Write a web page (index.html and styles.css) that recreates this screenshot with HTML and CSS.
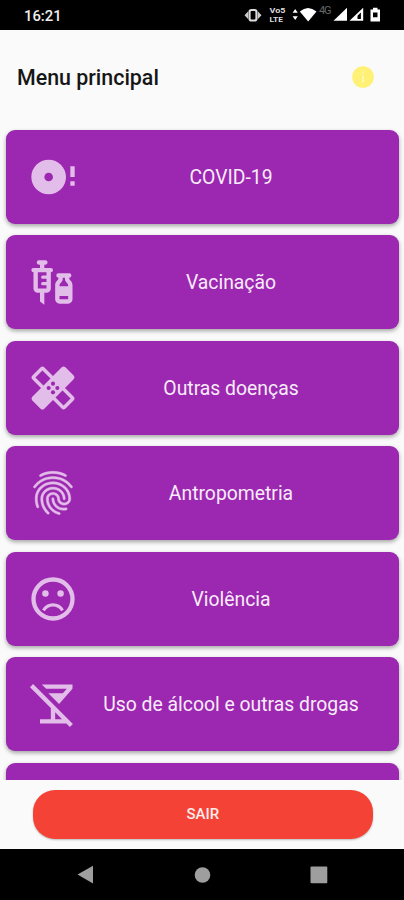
FILE: index.html
```
<!DOCTYPE html>
<html lang="pt-BR">
<head>
<meta charset="utf-8">
<title>Menu principal</title>
<link rel="stylesheet" href="styles.css">
</head>
<body>
<div class="phone">
  <header class="status">
    <span class="clock">16:21</span>
    <svg class="status-icons" width="140" height="29" viewBox="0 0 140 29" fill="#fff">
      <rect x="4.500" y="10" width="7" height="10.500" rx="2" fill="none" stroke="#ddd" stroke-width="2.200"/>
      <path d="M3 11.500v7.500L-.5 15.300zM13 11.500v7.500l3.500-3.700z" fill="#ccc"/>
      <g font-family="Roboto, sans-serif" font-weight="700">
        <text x="24.500" y="12.600" font-size="7" textLength="16" lengthAdjust="spacingAndGlyphs" fill="#ddd">Vo5</text>
        <text x="24.500" y="22" font-size="7.800" textLength="13.500" lengthAdjust="spacingAndGlyphs" fill="#ddd">LTE</text>
      </g>
      <path d="M50.200 9l2.600 3.800h-5.200zM50.200 20l2.600-3.800h-5.200z"/>
      <path d="M54.800 11.500Q63 4.500 71.500 11.500L63.200 21.600z"/>
      <text x="74" y="14" font-family="Roboto, sans-serif" font-size="11" textLength="12.500" fill="#666">4G</text>
      <path d="M88.500 20.700L102 7.800v12.900z"/>
      <path fill-rule="evenodd" d="M104.500 20.700L118.200 7.800v12.900zM112.500 19h3.400v-6.500l-3.400 3.300z"/>
      <path fill-rule="evenodd" d="M125.500 9.500h2.500V7.800h4.500v1.700h2.500v12h-9.500zM128 12.500v4.700h4.500v-4.700z"/>
    </svg>
  </header>
  <div class="appbar">
    <h1>Menu principal</h1>
    <svg class="info" width="22" height="22" viewBox="0 0 22 22">
      <circle cx="11" cy="11" r="10.800" fill="#fff176"/>
      <path d="M10 5.500h2v2h-2zM10 9.500h2v7h-2z" fill="#fff6ac"/>
    </svg>
  </div>
  <main class="list">
    <button class="card">
      <svg class="icon" viewBox="0 0 24 24"><path d="M20 16h2v-2h-2v2zm0-9v5h2V7h-2zM10 4c-4.420 0-8 3.580-8 8s3.580 8 8 8 8-3.580 8-8-3.580-8-8-8zm0 10c-1.100 0-2-.9-2-2s.9-2 2-2 2 .9 2 2-.9 2-2 2z"/></svg>
      <span class="label">COVID-19</span>
    </button>
    <button class="card">
      <svg class="icon" viewBox="0 0 24 24"><path fill-rule="evenodd" d="M11 5.500H8V4h.5a1 1 0 0 0 0-2h-3a1 1 0 0 0 0 2H6v1.500H3a1 1 0 0 0 0 2V15c0 1.100.9 2 2 2h1v4l2 1.500V17h1c1.100 0 2-.9 2-2V7.500a1 1 0 0 0 0-2zM9 9H7.250a.75.75 0 0 0 0 1.500H9V12H7.250a.75.75 0 0 0 0 1.500H9V15H5V7.500h4zM19.500 10.500V10a1 1 0 0 0 0-2h-5a1 1 0 0 0 0 2v.5c0 .5-1.500 1.160-1.500 3V20c0 1.100.9 2 2 2h4c1.100 0 2-.9 2-2v-6.500c0-1.840-1.500-2.500-1.500-3zM16.500 10.500V10h1v.5c0 1.600 1.500 2 1.500 3v.5h-4v-.5c0-1 1.500-1.400 1.500-3zM15 18.500h4V20h-4z"/></svg>
      <span class="label">Vacinação</span>
    </button>
    <button class="card">
      <svg class="icon" viewBox="0 0 24 24">
        <g transform="rotate(45 12 12)">
          <rect x="2" y="8.900" width="20" height="6.200" rx=".5" fill="none" stroke="#e3bde9" stroke-width="1.600"/>
          <rect x="8.100" y="1.200" width="7.800" height="21.600" rx="1.200"/>
        </g>
        <g fill="#9c27b0"><circle cx="12" cy="10" r=".95"/><circle cx="10" cy="12" r=".95"/><circle cx="14" cy="12" r=".95"/><circle cx="12" cy="14" r=".95"/></g>
      </svg>
      <span class="label">Outras doenças</span>
    </button>
    <button class="card">
      <svg class="icon" viewBox="0 0 24 24"><path stroke="#e3bde9" stroke-width=".25" d="M17.810 4.470c-.08 0-.16-.02-.23-.06C15.660 3.420 14 3 12.010 3c-1.980 0-3.860.47-5.570 1.410-.24.13-.54.04-.68-.2-.13-.24-.04-.55.2-.68C7.820 2.520 9.860 2 12.010 2c2.130 0 3.990.47 6.030 1.520.25.13.34.43.21.67-.09.18-.26.28-.44.28zM3.500 9.720c-.1 0-.2-.03-.29-.09-.23-.16-.28-.47-.12-.7.99-1.400 2.250-2.500 3.750-3.270C9.980 4.040 14 4.030 17.150 5.650c1.500.77 2.760 1.860 3.750 3.250.16.22.11.54-.12.7-.23.16-.54.11-.7-.12-.9-1.260-2.040-2.250-3.390-2.940-2.870-1.470-6.540-1.470-9.400.01-1.360.7-2.500 1.700-3.400 2.960-.08.14-.23.21-.39.21zm6.250 12.070c-.13 0-.26-.05-.35-.15-.87-.87-1.340-1.430-2.010-2.640-.69-1.230-1.050-2.730-1.050-4.340 0-2.970 2.540-5.390 5.660-5.390s5.660 2.420 5.660 5.390c0 .28-.22.5-.5.5s-.5-.22-.5-.5c0-2.420-2.090-4.390-4.660-4.390-2.570 0-4.660 1.970-4.660 4.390 0 1.440.32 2.770.93 3.850.64 1.150 1.080 1.640 1.850 2.420.19.2.19.51 0 .71-.11.1-.24.15-.37.15zm7.170-1.850c-1.190 0-2.240-.3-3.100-.89-1.490-1.010-2.380-2.650-2.380-4.390 0-.28.22-.5.5-.5s.5.22.5.5c0 1.410.72 2.740 1.940 3.560.71.48 1.540.71 2.540.71.24 0 .64-.03 1.040-.1.27-.05.53.13.58.41.05.27-.13.53-.41.58-.57.11-1.070.12-1.210.12zM14.910 22c-.04 0-.09-.01-.13-.02-1.590-.44-2.630-1.030-3.720-2.100-1.400-1.390-2.170-3.240-2.170-5.220 0-1.620 1.380-2.940 3.080-2.940 1.700 0 3.080 1.320 3.080 2.940 0 1.070.93 1.940 2.080 1.940s2.080-.87 2.080-1.940c0-3.770-3.250-6.830-7.250-6.830-2.840 0-5.440 1.580-6.610 4.030-.39.81-.59 1.760-.59 2.800 0 .78.07 2.010.67 3.610.1.26-.03.55-.29.64-.26.1-.55-.04-.64-.29-.49-1.310-.73-2.610-.73-3.960 0-1.200.23-2.290.68-3.240 1.330-2.790 4.280-4.600 7.510-4.600 4.550 0 8.250 3.510 8.250 7.830 0 1.620-1.380 2.940-3.080 2.940s-3.080-1.320-3.080-2.940c0-1.070-.93-1.940-2.080-1.940s-2.080.87-2.080 1.940c0 1.710.66 3.310 1.870 4.510.95.94 1.860 1.460 3.270 1.850.27.07.42.35.35.61-.05.23-.26.38-.47.38z"/></svg>
      <span class="label">Antropometria</span>
    </button>
    <button class="card">
      <svg class="icon" viewBox="0 0 24 24"><circle cx="12" cy="12" r="9" fill="none" stroke="#e3bde9" stroke-width="2"/><circle cx="8.500" cy="9.500" r="1.500"/><circle cx="15.500" cy="9.500" r="1.500"/><path d="M7.600 17.200Q9.200 14.750 12 14.750T16.400 17.200" fill="none" stroke="#e3bde9" stroke-width="1.500"/></svg>
      <span class="label">Violência</span>
    </button>
    <button class="card">
      <svg class="icon" viewBox="0 0 24 24"><path fill-rule="evenodd" d="M6.830 3H21v2l-6.200 6.970L9.830 7h6.740l1.780-2H8.830zM19.780 22.610L18.170 21H6v-2h5v-5.170L1.390 4.220 2.800 2.810l18.380 18.380zM16.170 19L13 15.830V19z"/></svg>
      <span class="label">Uso de álcool e outras drogas</span>
    </button>
    <div class="card"></div>
  </main>
  <div class="footer"><button class="exit">SAIR</button></div>
  <nav class="navbar">
    <svg width="404" height="51" viewBox="0 0 404 51" fill="#9e9e9e">
      <path d="M77.500 25.500L93 16.800v17.600z"/>
      <circle cx="202.500" cy="26" r="7.800"/>
      <rect x="310.500" y="17.500" width="16.800" height="16.800" rx="1"/>
    </svg>
  </nav>
</div>
</body>
</html>
```
FILE: styles.css
```
* { box-sizing: border-box; }
body { margin: 0; font-family: Roboto, "Liberation Sans", sans-serif; }
button { border: 0; padding: 0; font-family: inherit; }
.phone {
  width: 404px;
  height: 900px;
  display: flex;
  flex-direction: column;
  overflow: hidden;
  background: #fafafa;
}
.status {
  height: 29.5px;
  flex: none;
  display: flex;
  justify-content: space-between;
  background: #000;
  color: #eee;
  padding: 0 19px 0 24px;
}
.clock { font-size: 14.8px; font-weight: 500; line-height: 32px; }
.status-icons { display: block; overflow: visible; }
.appbar {
  height: 94.5px;
  flex: none;
  display: flex;
  align-items: center;
  justify-content: space-between;
  padding: 0 30px 0 17px;
}
h1 { margin: 0; padding-top: 2px; font-size: 21.4px; font-weight: 500; color: #161616; line-height: 30px; }
.list {
  height: 655.5px;
  flex: none;
  overflow: hidden;
  display: flex;
  flex-direction: column;
  gap: 11.5px;
  padding: 5.6px 5px 0 6px;
}
.card {
  height: 94px;
  flex: none;
  display: flex;
  align-items: center;
  padding: 0 16px 0 21px;
  border-radius: 9px;
  background: #9c27b0;
  color: #f8ecfa;
  box-shadow: 0 2px 4px rgba(0, 0, 0, .35);
}
.icon { width: 52px; height: 52px; flex: none; fill: #e3bde9; overflow: visible; }
.label { flex: 1; padding-top: 2px; text-align: center; font-size: 19.35px; line-height: 28px; }
.footer { height: 69px; flex: none; padding: 10px 31px 0 32.5px; }
.exit {
  display: block;
  width: 100%;
  height: 49.5px;
  border-radius: 22px;
  background: #f44336;
  color: #fdeceb;
  font-size: 15px;
  font-weight: 500;
  box-shadow: 0 1px 2px rgba(0, 0, 0, .25);
}
.navbar { flex: 1; background: #000; }
.navbar svg { display: block; }
```
